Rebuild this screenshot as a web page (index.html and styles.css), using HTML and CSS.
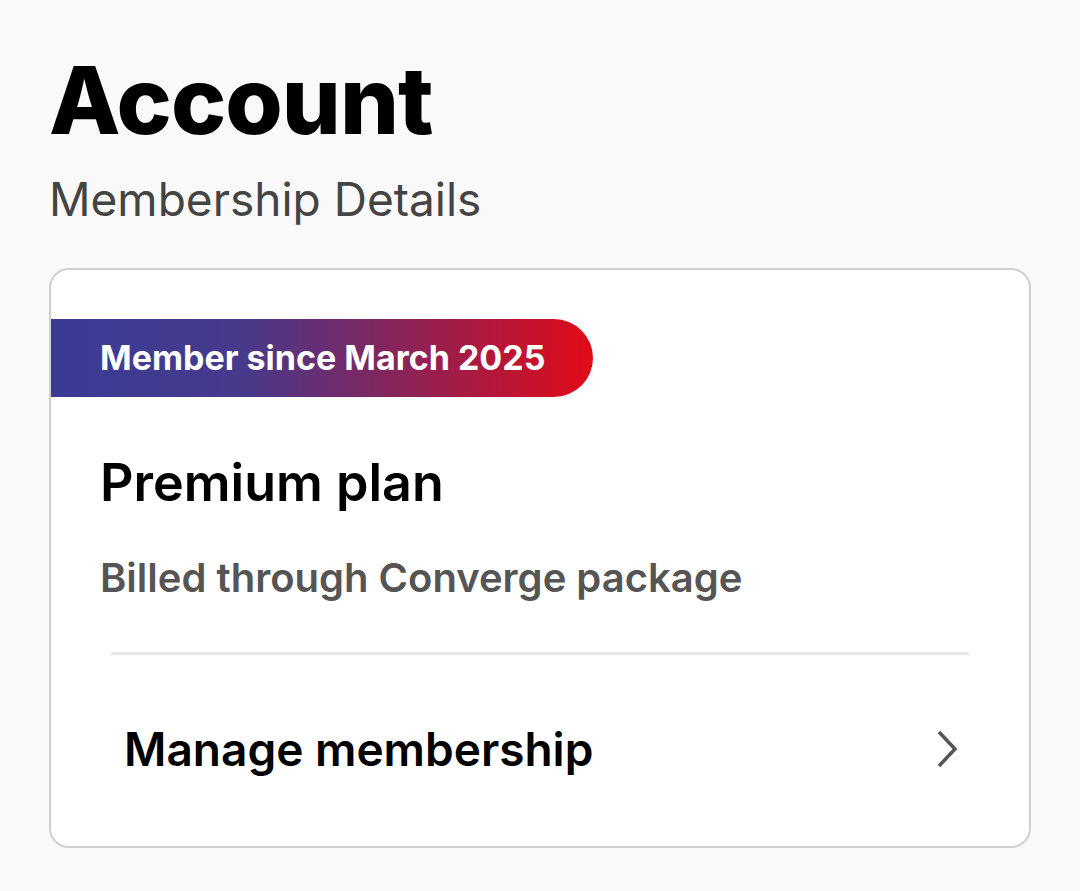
FILE: index.html
```html
<!DOCTYPE html>
<html lang="en">

<head>
    <meta charset="UTF-8" />
    <meta name="viewport" content="width=device-width, initial-scale=1" />
    <title>Account</title>
    <link rel="stylesheet" href="styles.css">
</head>

<body>
    <div class="page">
        <h1>Account</h1>
        <div class="subtitle">Membership Details</div>

        <div class="card">
            <div class="badge">Member since March 2025</div>

            <div class="plan">
                <div class="plan-name">Premium plan</div>
                <div class="plan-billing">Billed through Converge package</div>
            </div>

            <hr class="divider" />

            <a class="row" href="#">
                <span>Manage membership</span>
                <svg class="chevron" width="24" height="40" viewBox="0 0 24 40">
                    <path d="M4 3 L20 20 L4 37" fill="none" stroke="#555" stroke-width="3.5" />
                </svg>
            </a>
        </div>
    </div>
</body>

</html>
```

FILE: styles.css
```css
:root {
    --text-color: #000;
    --muted: #444;
    --bg-color: #f9f9f9;
    --border: #cfcfcf;
    --font: 'Inter', 'Roboto', sans-serif;
}

body {
    margin: 0;
    padding: 0;
    background-color: var(--bg-color);
    font-family: var(--font);
    color: var(--text-color);
}

.page {
    padding: 54px 49px 40px;
}

h1 {
    margin: 0;
    font-size: 93px;
    font-weight: 800;
    line-height: 1;
    letter-spacing: -1px;
}

.subtitle {
    margin-top: 24px;
    font-size: 46px;
    color: var(--muted);
}

.card {
    margin-top: 41px;
    background: #fff;
    border: 2px solid var(--border);
    border-radius: 20px;
    padding: 49px 0 0;
}

/* ribbon that hangs off the left edge */
.badge {
    display: inline-block;
    height: 78px;
    line-height: 78px;
    padding: 0 48px 0 49px;
    border-radius: 0 39px 39px 0;
    background: linear-gradient(90deg, #3a3b95 0%, #463a8c 35%, #8a2358 65%, #e20a18 100%);
    color: #fff;
    font-size: 34px;
    font-weight: 700;
}

.plan {
    padding: 54px 49px 0;
}

.plan-name {
    font-size: 52px;
    font-weight: 600;
}

.plan-billing {
    margin-top: 39px;
    font-size: 40px;
    font-weight: 600;
    color: #555;
}

.divider {
    margin: 50px 60px 0;
    border: 0;
    border-top: 3px solid #e6e6e6;
}

.row {
    display: flex;
    align-items: center;
    justify-content: space-between;
    padding: 66px 70px 69px 73px;
    color: var(--text-color);
    text-decoration: none;
    font-size: 46px;
    font-weight: 600;
}

.chevron {
    display: block;
}
```
